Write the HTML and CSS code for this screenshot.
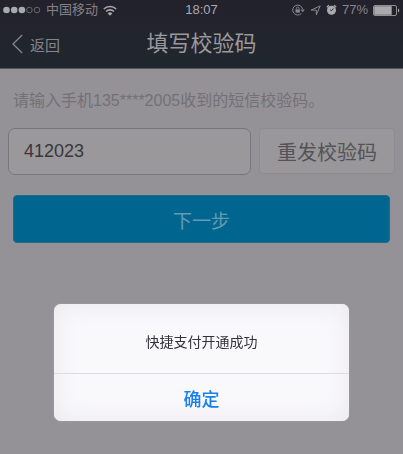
FILE: index.html
```html
<!DOCTYPE html>
<html lang="zh-CN">
<head>
    <meta charset="UTF-8">
    <meta name="viewport" content="width=device-width, initial-scale=1.0">
    <title>填写校验码</title>
    <link rel="stylesheet" href="styles.css">
</head>
<body>
    <header class="header">
        <div class="status-bar">
            <div class="status-left">
                <svg class="signal" width="38" height="8" viewBox="0 0 38 8">
                    <circle cx="3.5" cy="4" r="3.3" fill="currentColor"/>
                    <circle cx="11.2" cy="4" r="3.3" fill="currentColor"/>
                    <circle cx="18.9" cy="4" r="3.3" fill="currentColor"/>
                    <circle cx="26.4" cy="4" r="2.8" fill="none" stroke="#77767c" stroke-width=".8"/>
                    <circle cx="34" cy="4" r="2.8" fill="none" stroke="#77767c" stroke-width=".8"/>
                </svg>
                <span class="carrier">中国移动</span>
                <svg class="wifi" width="14" height="11" viewBox="0 0 14 11" fill="none" stroke="currentColor" stroke-width="1.6">
                    <path d="M.8 4a8.8 8.8 0 0 1 12.4 0M3.1 6.5a5.5 5.5 0 0 1 7.8 0"/>
                    <path d="M7 10.8 4.7 8.4a3.2 3.2 0 0 1 4.6 0z" fill="currentColor" stroke="none"/>
                </svg>
            </div>
            <span class="time">18:07</span>
            <div class="status-right">
                <svg width="13" height="12" viewBox="0 0 13 12" fill="none" stroke="currentColor">
                    <path d="M10.6 5.2A5 5 0 1 0 9.4 9.4"/>
                    <path d="M8.6 5.6h4.2l-2.1 2.6z" fill="currentColor" stroke="none"/>
                    <path d="M3.5 5.4h4.4v3.2H3.5z" fill="currentColor" stroke="none"/>
                    <path d="M4.4 5.6V4.3a1.3 1.3 0 0 1 2.6 0v1.3" stroke-width=".9"/>
                </svg>
                <svg width="11" height="11" viewBox="0 0 11 11" fill="none" stroke="currentColor" stroke-linejoin="round">
                    <path d="M10.2.9 6.3 10V5.1H1.1z"/>
                </svg>
                <svg class="alarm" width="11" height="12" viewBox="0 0 11 12">
                    <circle cx="5.5" cy="6.3" r="4.5" fill="currentColor"/>
                    <path d="M.8 3.3 3 1.3M10.2 3.3 8 1.3" stroke="currentColor" stroke-width="1.4"/>
                    <path d="M7.4 4.5 5.5 6.7 4.1 6" fill="none" stroke="#23222c" stroke-width=".9"/>
                </svg>
                <span class="percent">77%</span>
                <svg class="battery" width="27" height="11" viewBox="0 0 27 11">
                    <rect x=".5" y=".5" width="23" height="10" rx="1.5" fill="none" stroke="currentColor" stroke-width=".8"/>
                    <rect x="1.2" y="1.2" width="17.5" height="8.6" fill="currentColor"/>
                    <path d="M25 3.5a2.2 2.2 0 0 1 0 4z" fill="currentColor"/>
                </svg>
            </div>
        </div>
        <nav class="nav">
            <a class="back" href="#">
                <svg width="11" height="20" viewBox="0 0 11 20" fill="none" stroke="currentColor" stroke-width="1.3">
                    <path d="M10.2 1 1 10l9.2 9"/>
                </svg>
                返回
            </a>
            <h1 class="title">填写校验码</h1>
        </nav>
    </header>

    <main>
        <form class="form">
            <label class="hint" for="code">请输入手机135****2005收到的短信校验码。</label>
            <div class="code-row">
                <input class="code" type="text" id="code" value="412023">
                <button class="resend" type="button">重发校验码</button>
            </div>
            <button class="next" type="button">下一步</button>
        </form>
    </main>

    <div class="overlay">
        <div class="dialog" role="alertdialog" aria-labelledby="message">
            <p class="message" id="message">快捷支付开通成功</p>
            <button class="confirm" type="button">确定</button>
        </div>
    </div>
</body>
</html>
```
FILE: styles.css
```css
* {
    box-sizing: border-box;
}
body {
    margin: 0;
    min-height: 100vh;
    font-family: "Liberation Sans", "Noto Sans CJK SC", sans-serif;
    background-color: #949297;
}
button, input {
    font-family: inherit;
    margin: 0;
}
svg {
    display: block;
    flex: none;
}
.header {
    background: linear-gradient(#23212c, #20272f);
    border-bottom: 1px solid #55565c;
    color: #96959a;
}
.status-bar {
    display: grid;
    grid-template-columns: 1fr auto 1fr;
    align-items: center;
    height: 20px;
    padding: 0 3px;
    font-size: 13px;
    line-height: 20px;
}
.status-left, .status-right {
    display: flex;
    align-items: center;
    gap: 5px;
}
.status-right {
    justify-content: flex-end;
    color: #87868b;
}
.signal, .wifi, .time, .alarm, .battery {
    color: #aaa9ad;
}
.carrier {
    color: #828187;
}
.nav {
    display: grid;
    grid-template-columns: 1fr auto 1fr;
    align-items: center;
    height: 48px;
    padding: 0 12px;
}
.back {
    display: flex;
    align-items: center;
    gap: 7px;
    color: #85868b;
    font-size: 15px;
    text-decoration: none;
}
.title {
    margin: 0;
    font-size: 22px;
    font-weight: normal;
    line-height: 48px;
    color: #9a999d;
}
.form {
    display: flex;
    flex-direction: column;
    padding: 20px 8px;
}
.hint {
    padding-left: 5px;
    font-size: 16px;
    line-height: 24px;
    color: #737176;
    white-space: nowrap;
}
.code-row {
    display: flex;
    gap: 8px;
    margin-top: 15px;
}
.code {
    flex: 1;
    min-width: 0;
    height: 47px;
    padding: 0 15px;
    border: 1px solid #78767a;
    border-radius: 7px;
    background-color: #9a989a;
    color: #38373b;
    font-size: 18px;
}
.resend {
    width: 136px;
    height: 46px;
    padding: 0;
    border: 1px solid #8d8b90;
    border-radius: 4px;
    background-color: #99979a;
    color: #545257;
    font-size: 20px;
}
.next {
    height: 48px;
    margin: 20px 5px 0;
    border: 1px solid #1b6c8c;
    border-radius: 4px;
    background-color: #006690;
    color: #659bb0;
    font-size: 19px;
}
.overlay {
    position: fixed;
    inset: 0;
    display: flex;
    align-items: flex-end;
    padding: 33px 54px;
}
.dialog {
    flex: 1;
    border-radius: 7px;
    background-color: #f9f8fb;
    box-shadow: inset 0 0 24px #e9e8eb, 0 0 2px #aaa8ad;
    text-align: center;
}
.message {
    margin: 0;
    padding: 28px 0 20px;
    font-size: 14px;
    line-height: 21px;
    color: #333236;
}
.confirm {
    display: block;
    width: 100%;
    height: 48px;
    border: 0;
    border-top: 1px solid #dddce0;
    background: none;
    color: #1680ee;
    font-size: 18px;
    font-weight: 500;
}
```
